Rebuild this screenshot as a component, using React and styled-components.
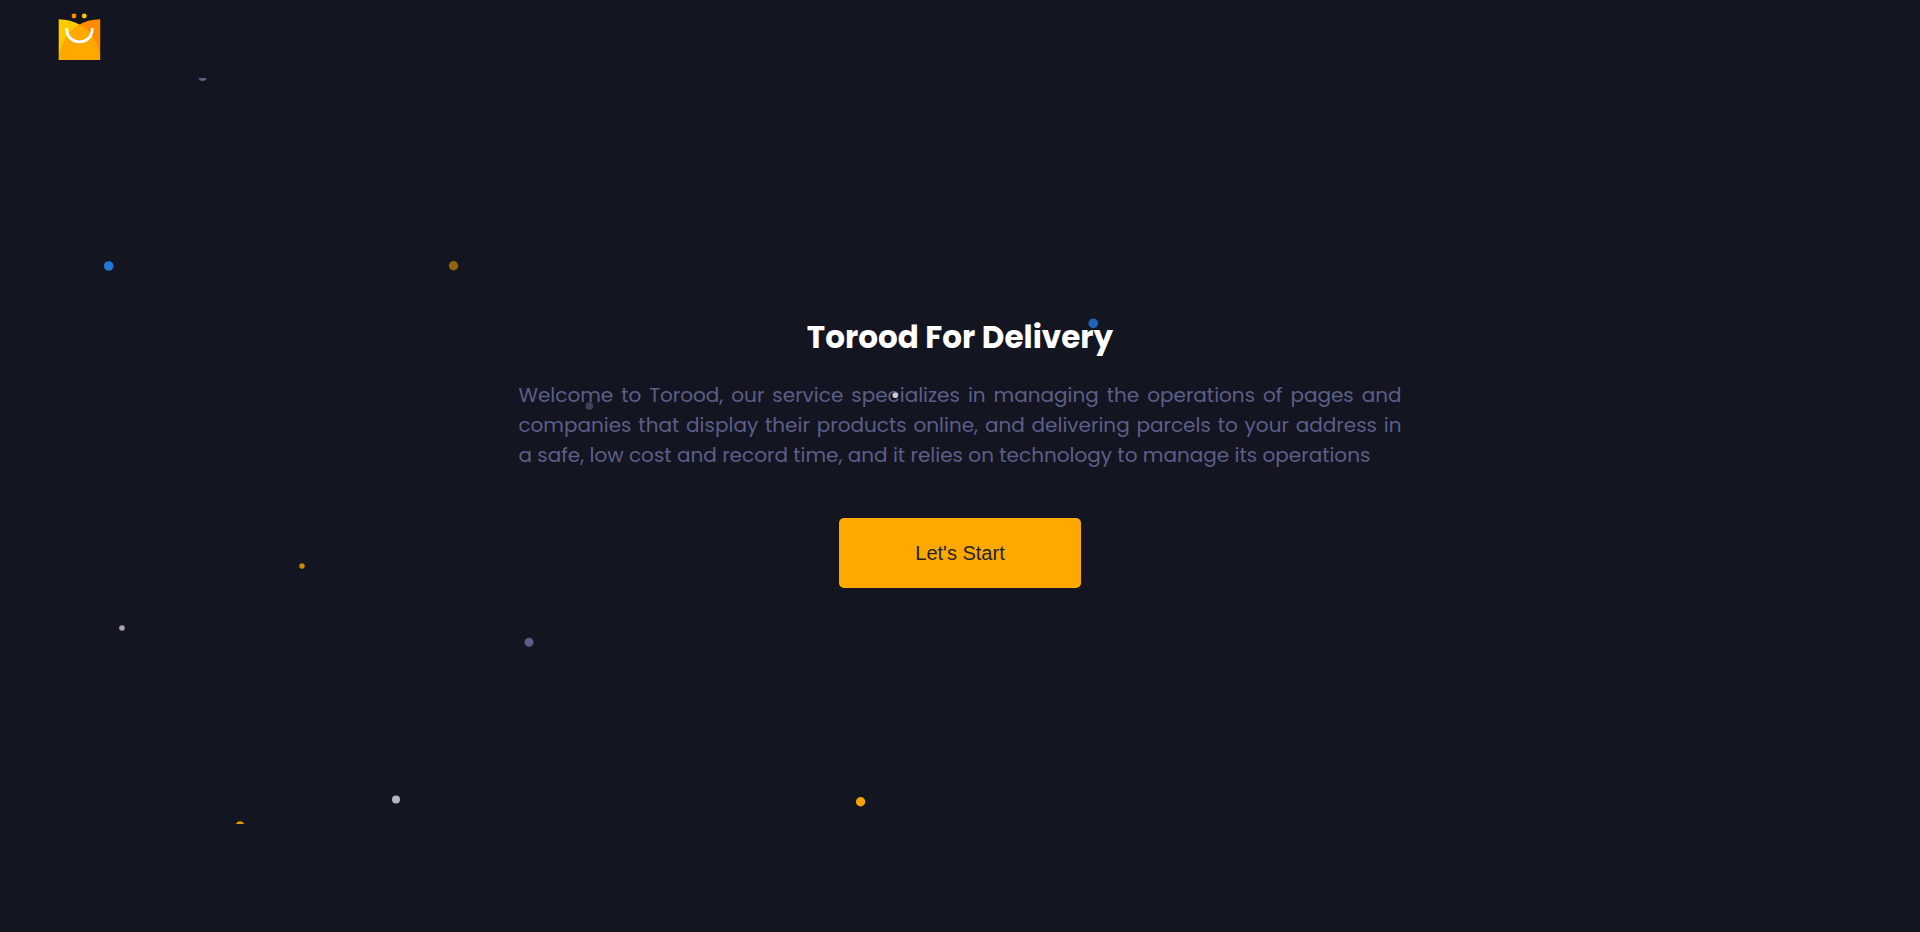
import React from 'react';
import styled, { createGlobalStyle } from 'styled-components';

const GlobalStyle = createGlobalStyle`
  *, *::before, *::after { box-sizing: border-box; }
  body {
    margin: 0;
    background: #131521;
    font-family: Poppins, Inter, "Liberation Sans", sans-serif;
  }
`;

const Page = styled.div`
  display: flex;
  flex-direction: column;
  min-height: 100vh;
`;

const Header = styled.header`
  display: flex;
  align-items: flex-start;
  height: 78px;
  padding: 12px 56px;
`;

const HomeLink = styled.a`
  display: block;
  line-height: 0;
`;

const Hero = styled.main`
  position: relative;
  display: flex;
  flex-direction: column;
  align-items: center;
  justify-content: center;
  min-height: 80vh;
`;

const Particles = styled.svg`
  position: absolute;
  inset: 0;
  width: 100%;
  height: 100%;
  pointer-events: none;
`;

const Title = styled.h1`
  margin: 0 0 20px;
  color: #fff;
  font-size: 31px;
  font-weight: 700;
  line-height: 46px;
`;

const Intro = styled.p`
  width: 46%;
  margin: 0 0 48px;
  color: #5c5f88;
  font-size: 20px;
  font-weight: 400;
  line-height: 30px;
  text-align: justify;
`;

const StartButton = styled.button`
  padding: 22px 76px;
  border: 0;
  border-radius: 5px;
  background: #ffa900;
  color: #212529;
  font-family: Arial, "Liberation Sans", sans-serif;
  font-size: 20px;
  line-height: 26px;
  cursor: pointer;
`;

const particles = [
  { x: 202.5, y: -1, r: 4, color: '#5f5f88' },
  { x: 108.7, y: 188, r: 4.8, color: '#1f79d4' },
  { x: 453.5, y: 187.7, r: 4.7, color: '#92630f' },
  { x: 1093.3, y: 245.3, r: 4.8, color: '#1f66bb' },
  { x: 589.3, y: 328, r: 3.8, color: '#40405c' },
  { x: 895.3, y: 317.2, r: 2.8, color: '#cbc9d6' },
  { x: 302, y: 488, r: 2.7, color: '#cc8a08' },
  { x: 122, y: 550, r: 2.8, color: '#a5a4b2' },
  { x: 529, y: 564.2, r: 4.5, color: '#5c5c84' },
  { x: 396, y: 721.5, r: 4, color: '#b3b5c3' },
  { x: 860.6, y: 723.7, r: 4.7, color: '#f3a204' },
  { x: 240, y: 747.5, r: 4.3, color: '#e89a06' },
];

function Logo() {
  return (
    <svg width="46" height="50" viewBox="0 0 46 50" aria-hidden="true">
      <circle cx="18" cy="4" r="2.4" fill="#ff8c00" />
      <circle cx="28.3" cy="4" r="2.4" fill="#ffc800" />
      <path d="M2.7 7.2Q15 7.6 23.5 12.5L23.5 48H2.7Z" fill="#ffcb00" />
      <path d="M44.2 7.2Q31 7.6 23.5 12.5L23.5 48H44.2Z" fill="#ff8c00" />
      <path d="M23.5 12.5C12 18 4 31 2.7 48H44.2C43 31 35 18 23.5 12.5Z" fill="#ffa900" />
      <path d="M10.7 17.2C11 34 36 34 36.2 17.2" fill="none" stroke="#fff" strokeWidth="2.8" strokeLinecap="round" />
    </svg>
  );
}

export default function App() {
  return (
    <>
      <GlobalStyle />
      <Page>
        <Header>
          <HomeLink href="#" aria-label="Torood home">
            <Logo />
          </HomeLink>
        </Header>
        <Hero>
          <Title>Torood For Delivery</Title>
          <Intro>
            Welcome to Torood, our service specializes in managing the operations of pages and
            companies that display their products online, and delivering parcels to your address in
            a safe, low cost and record time, and it relies on technology to manage its operations
          </Intro>
          <StartButton type="button">Let's Start</StartButton>
          <Particles aria-hidden="true">
            {particles.map(({ x, y, r, color }) => (
              <circle key={`${x}-${y}`} cx={x} cy={y} r={r} fill={color} />
            ))}
          </Particles>
        </Hero>
      </Page>
    </>
  );
}
